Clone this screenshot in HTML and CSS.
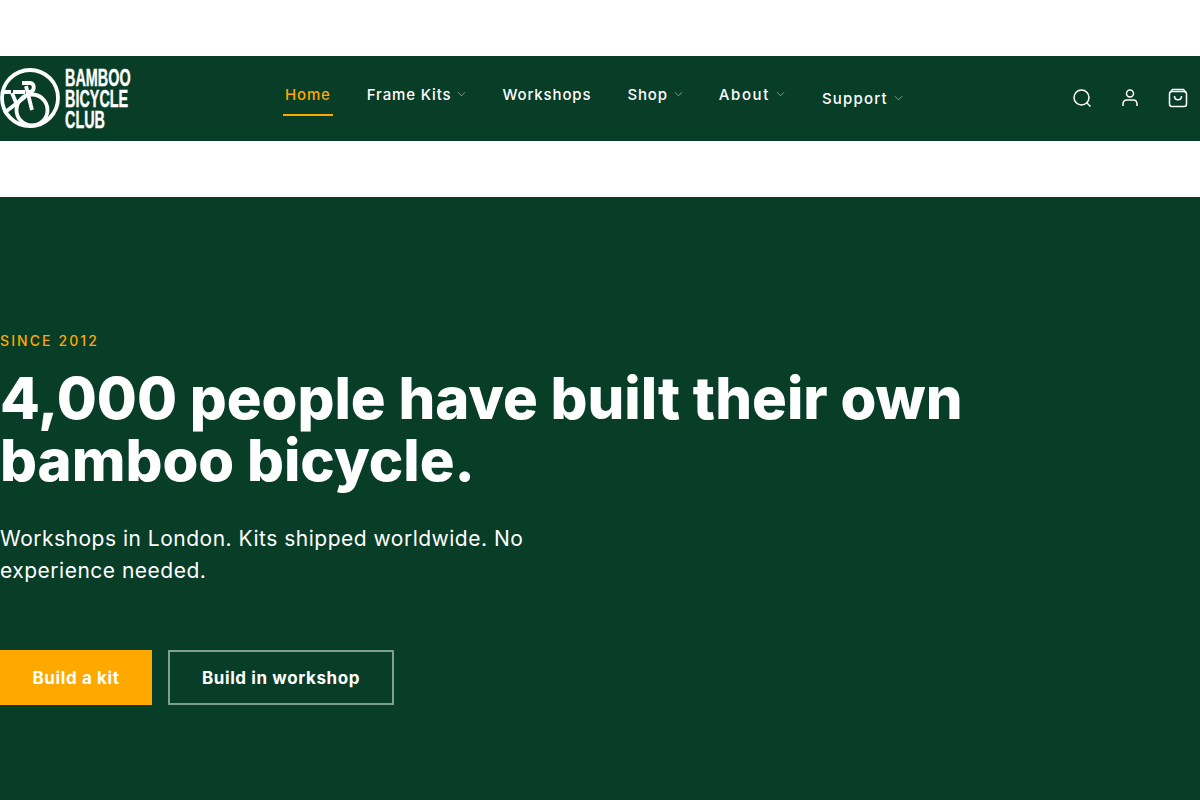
FILE: index.html
```html
<!DOCTYPE html>
<html lang="en">
<head>
  <meta charset="UTF-8">
  <meta name="viewport" content="width=device-width, initial-scale=1">
  <title>Bamboo Bicycle Club</title>
  <link rel="stylesheet" href="styles.css">
</head>
<body>

<header class="header">
  <a class="logo" href="#">
    <svg class="logo-mark" viewBox="0 0 62 62" fill="none" stroke="#fff" stroke-width="3.800">
      <circle cx="30" cy="31" r="28"/>
      <circle cx="32" cy="43" r="15.500"/>
      <path d="M2 25h9M13 25h12M22 16h8c5 0 5 8 0 9h-4M26 19l6 24M25 30L4 46M12 26l5 12"/>
    </svg>
    <span class="logo-text">BAMBOO<br>BICYCLE<br>CLUB</span>
  </a>
  <nav class="nav">
    <a class="nav-link active" href="#">Home</a>
    <a class="nav-link" href="#">Frame Kits <svg class="chev" viewBox="0 0 10 6"><path d="M1 1l4 4 4-4"/></svg></a>
    <a class="nav-link" href="#">Workshops</a>
    <a class="nav-link" href="#">Shop <svg class="chev" viewBox="0 0 10 6"><path d="M1 1l4 4 4-4"/></svg></a>
    <a class="nav-link about" href="#">About <svg class="chev" viewBox="0 0 10 6"><path d="M1 1l4 4 4-4"/></svg></a>
    <a class="nav-link drop" href="#">Support <svg class="chev" viewBox="0 0 10 6"><path d="M1 1l4 4 4-4"/></svg></a>
  </nav>
  <div class="icons">
    <svg viewBox="0 0 20 20"><circle cx="9.500" cy="9.500" r="7.500"/><path d="M15 15l3.500 3.500"/></svg>
    <svg viewBox="0 0 20 20"><circle cx="10" cy="5.500" r="3.500"/><path d="M3 18v-2c0-3 2-4 4-4h6c2 0 4 1 4 4v2"/></svg>
    <svg viewBox="0 0 20 20"><rect x="1.500" y="3.500" width="17" height="15" rx="2.500"/><path d="M2.500 4l2-2.500h11l2 2.500M6.500 8c0 5 7 5 7 0"/></svg>
  </div>
</header>

<section class="hero">
  <p class="eyebrow">SINCE 2012</p>
  <h1>4,000 people have built their own bamboo bicycle.</h1>
  <p class="lead">Workshops in London. Kits shipped worldwide. No experience needed.</p>
  <div class="actions">
    <a class="btn btn-primary" href="#">Build a kit</a>
    <a class="btn btn-outline" href="#">Build in workshop</a>
  </div>
</section>

</body>
</html>
```
FILE: styles.css
```css
* {
  box-sizing: border-box;
}
body {
  margin: 0;
  height: 800px;
  overflow: hidden;
  padding-top: 56px;
  background: white;
  color: white;
  font-family: Inter, "Liberation Sans", sans-serif;
}
a {
  color: inherit;
  text-decoration: none;
}
.header {
  display: flex;
  align-items: center;
  height: 85px;
  padding-right: 12px;
  background: #083d28;
}
.logo {
  display: flex;
  align-items: center;
  gap: 3px;
  width: 283px;
  padding-bottom: 1px;
}
.logo-mark {
  width: 62px;
  height: 62px;
}
.logo-text {
  font-family: "Liberation Sans", sans-serif;
  font-size: 24px;
  line-height: 21px;
  font-weight: 700;
  white-space: nowrap;
  -webkit-text-stroke: 0.4px white;
  transform: scaleX(0.6);
  transform-origin: left center;
}
.nav {
  display: flex;
  flex: 1;
  gap: 32px;
  align-self: flex-start;
  padding-top: 19px;
}
.nav-link {
  display: flex;
  align-items: center;
  gap: 6px;
  height: 41px;
  padding: 0 2px 1px;
  border-bottom: 2px solid transparent;
  font-size: 15px;
  font-weight: 500;
  letter-spacing: 0.85px;
}
.nav-link.active {
  color: #ffa800;
  border-bottom-color: #ffa800;
}
.nav-link.about {
  letter-spacing: 1.6px;
}
.nav-link.drop {
  margin: 4px 0 0 1px;
  letter-spacing: 1.2px;
}
.chev {
  width: 9px;
  height: 6px;
  fill: none;
  stroke: #8fa89c;
  stroke-width: 1;
}
.icons {
  display: flex;
  gap: 28px;
  padding-bottom: 2px;
}
.icons svg {
  width: 20px;
  height: 20px;
  fill: none;
  stroke: white;
  stroke-width: 1.5;
}
.hero {
  height: 603px;
  margin-top: 56px;
  padding-top: 135px;
  background: #083d28;
}
.eyebrow {
  margin: 0;
  font-size: 14px;
  line-height: 17px;
  font-weight: 500;
  letter-spacing: 2.1px;
  color: #ffa800;
}
h1 {
  width: 1000px;
  margin: 18px 0 0;
  font-size: 58px;
  line-height: 62px;
  font-weight: 800;
}
.lead {
  width: 530px;
  margin: 32px 0 0;
  font-size: 21px;
  line-height: 32px;
  letter-spacing: 0.5px;
}
.actions {
  display: flex;
  gap: 16px;
  margin-top: 63px;
}
.btn {
  display: flex;
  align-items: center;
  justify-content: center;
  height: 55px;
  font-size: 17px;
  font-weight: 700;
  letter-spacing: 0.6px;
}
.btn-primary {
  width: 152px;
  background: #ffa800;
}
.btn-outline {
  width: 226px;
  border: 2px solid #7f9f90;
}
```
